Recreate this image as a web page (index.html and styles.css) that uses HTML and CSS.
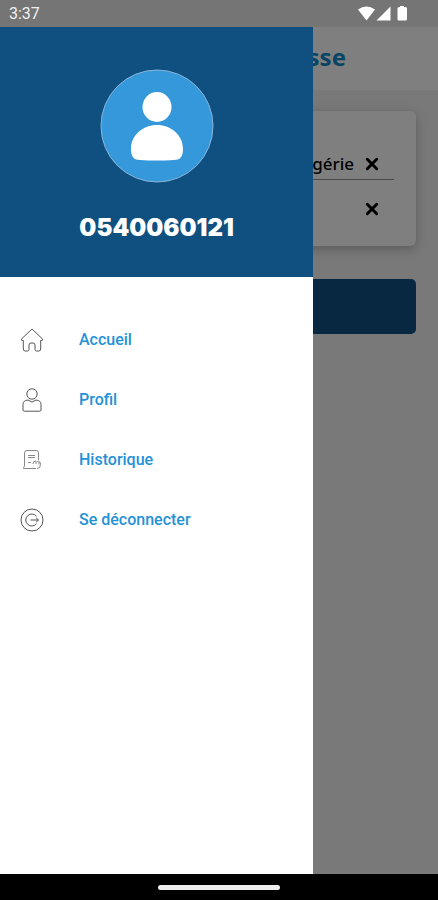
FILE: index.html
```html
<!DOCTYPE html>
<html lang="fr">
<head>
<meta charset="utf-8">
<meta name="viewport" content="width=device-width, initial-scale=1">
<title>Menu</title>
<link rel="stylesheet" href="styles.css">
</head>
<body>
<div class="statusbar">
  <span class="clock">3:37</span>
  <svg class="status-icons" viewBox="0 0 50 16" aria-hidden="true">
    <path d="M0 3.600Q8.500-2.600 17 3.600L8.500 14.500Z"/>
    <path d="M32.500 .5V14.500H18.500Z"/>
    <path d="M42 1V0h4v1h1.500Q49 1 49 2.500v10.500Q49 14.500 47.500 14.500h-7Q39.500 14.500 39.500 13V2.500Q39.500 1 41 1Z"/>
  </svg>
</div>
<div class="screen">
  <main class="page">
    <header class="page-header"><h1>sse</h1></header>
    <div class="content">
      <section class="card">
        <div class="field field-lined">
          <span>gérie</span>
          <button class="clear" type="button" aria-label="Effacer"><svg viewBox="0 0 14 14"><path d="M2.300 2.300 11.700 11.700M11.700 2.300 2.300 11.700"/></svg></button>
        </div>
        <div class="field">
          <button class="clear" type="button" aria-label="Effacer"><svg viewBox="0 0 14 14"><path d="M2.300 2.300 11.700 11.700M11.700 2.300 2.300 11.700"/></svg></button>
        </div>
      </section>
      <button class="submit" type="button" aria-label="Valider"></button>
    </div>
  </main>
  <div class="scrim"></div>
  <aside class="drawer">
    <div class="profile">
      <svg class="avatar" viewBox="0 0 114 114" aria-hidden="true">
        <circle class="disc" cx="57" cy="57" r="56"/>
        <ellipse class="person" cx="57" cy="38" rx="14.500" ry="15"/>
        <path class="person" d="M31 80C31 66 43 56 57 56S83 66 83 80C83 88 80 91 74 91Q57 92 40 91C34 91 31 88 31 80Z"/>
      </svg>
      <p class="phone">0540060121</p>
    </div>
    <nav class="menu">
      <a href="#accueil">
        <svg viewBox="0 0 24 24" aria-hidden="true"><path d="M12 1 1.300 11.200Q1 13 3.300 12.500V21Q3.300 23 5.300 23H7.500Q9 23 9 21.500V17Q9 15 11 15H13Q15 15 15 17V21.500Q15 23 16.500 23H18.700Q20.700 23 20.700 21V12.500Q23 13 22.700 11.200Z"/></svg>
        <span>Accueil</span>
      </a>
      <a href="#profil">
        <svg viewBox="0 0 24 24" aria-hidden="true"><circle cx="12" cy="6" r="5.200"/><path d="M8 12Q3 12.500 3 16.500V22Q3 23.200 4.500 23.200H19.500Q21 23.200 21 22V16.500Q21 12.500 16 12L12 14Z"/></svg>
        <span>Profil</span>
      </a>
      <a href="#historique">
        <svg class="light" viewBox="0 0 24 24" aria-hidden="true"><path d="M4.500 18V5Q4.500 2.500 7 2.500H16.500Q18.500 2.500 18.500 4.500V12M4.500 18Q3.500 19 3.500 20.500H16M8 7.500H15M8 9.500H15M8 14.500H11M13 16Q13 13 16 13V16M17 13.500Q20.500 12.500 20.500 16.500Q20.500 20.500 17 20.500M19 14V16.500"/></svg>
        <span>Historique</span>
      </a>
      <a href="#deconnexion">
        <svg viewBox="0 0 24 24" aria-hidden="true"><circle cx="12" cy="12" r="11"/><path d="M16.500 8.300A6 6 0 1 0 16.500 15.700M10.500 12H18.500M16 9.800 18.500 12 16 14.200"/></svg>
        <span>Se déconnecter</span>
      </a>
    </nav>
  </aside>
</div>
<div class="navbar"><span class="handle"></span></div>
</body>
</html>
```
FILE: styles.css
```css
* {
  box-sizing: border-box;
}

body {
  margin: 0;
  min-height: 100vh;
  display: flex;
  flex-direction: column;
  font-family: Roboto, "Liberation Sans", sans-serif;
}

h1,
p {
  margin: 0;
}

button {
  border: 0;
  padding: 0;
  background: none;
}

.statusbar {
  display: flex;
  align-items: center;
  justify-content: space-between;
  height: 27px;
  padding: 0 30px 0 9px;
  background: #757575;
}

.clock {
  color: #f0f0f0;
  font-size: 16px;
  line-height: 28px;
}

.status-icons {
  width: 50px;
  height: 16px;
  fill: #fff;
}

.screen {
  position: relative;
  flex: 1;
  display: flex;
}

.page {
  flex: 1;
  background: #f2f2f2;
  font-family: "Noto Sans", sans-serif;
}

.page-header {
  display: flex;
  justify-content: flex-end;
  height: 63px;
  padding: 12px 92px 0 0;
  background: #fff;
}

.page-header h1 {
  color: #1288c8;
  font-size: 24px;
  line-height: 36px;
  font-weight: 700;
}

.content {
  display: flex;
  flex-direction: column;
  gap: 33px;
  padding: 21px 22px;
}

.card {
  padding: 38px 22px 8px;
  border-radius: 6px;
  background: #fff;
  box-shadow: 0 3px 12px rgba(0, 0, 0, 0.25);
}

.field {
  display: flex;
  align-items: center;
  justify-content: flex-end;
  gap: 11px;
  height: 58px;
  padding-right: 15px;
  color: #000;
  font-size: 17px;
  line-height: 30px;
  font-weight: 500;
}

.field-lined {
  height: 31px;
  border-bottom: 1px solid #999;
}

.clear {
  width: 14px;
  height: 14px;
}

.clear svg {
  display: block;
  width: 14px;
  height: 14px;
  fill: none;
  stroke: #000;
  stroke-width: 3;
  stroke-linecap: round;
}

.submit {
  height: 55px;
  border-radius: 5px;
  background: #0f5080;
}

.scrim {
  position: absolute;
  inset: 0;
  background: rgba(0, 0, 0, 0.5);
}

.drawer {
  position: absolute;
  top: 0;
  bottom: 0;
  left: 0;
  width: 71.5%;
  background: #fff;
}

.profile {
  display: flex;
  flex-direction: column;
  align-items: center;
  gap: 25px;
  height: 250px;
  padding-top: 42px;
  background: #0f5080;
}

.avatar {
  width: 114px;
  height: 114px;
}

.disc {
  fill: #3498db;
  stroke: #8ab4d6;
  stroke-width: 1;
}

.person {
  fill: #fff;
}

.phone {
  color: #fff;
  font-family: Inter, sans-serif;
  font-size: 24px;
  line-height: 40px;
  font-weight: 900;
}

.menu {
  display: flex;
  flex-direction: column;
  padding-top: 33px;
}

.menu a {
  display: flex;
  align-items: center;
  gap: 35px;
  height: 60px;
  padding-left: 20px;
  color: #2492d6;
  font-size: 16px;
  line-height: 20px;
  font-weight: 500;
  text-decoration: none;
}

.menu svg {
  width: 24px;
  height: 24px;
  fill: none;
  stroke: #555;
  stroke-width: 1;
}

.menu .light {
  stroke: #888;
}

.navbar {
  display: flex;
  align-items: center;
  justify-content: center;
  height: 26px;
  background: #000;
}

.handle {
  width: 122px;
  height: 5px;
  border-radius: 3px;
  background: #eee;
}
```
